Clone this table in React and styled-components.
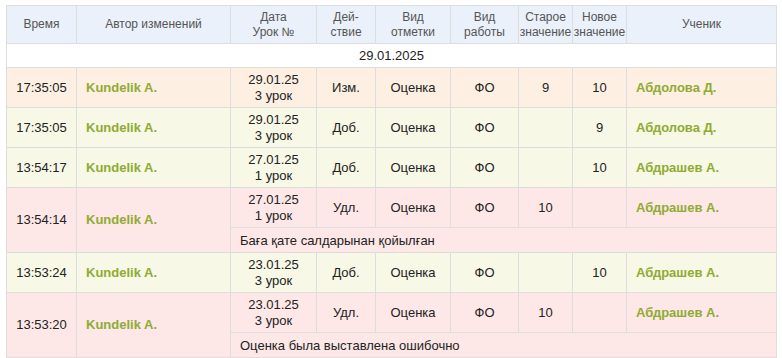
import React from 'react'
import styled, { createGlobalStyle } from 'styled-components'

const GlobalStyle = createGlobalStyle`
  body {
    margin: 0;
    padding: 5px 6px;
    background: #fff;
    font-family: "Liberation Sans", Arial, sans-serif;
  }
`

const Table = styled.table`
  width: 770px;
  border-collapse: collapse;
  table-layout: fixed;
  font-size: 13px;
  color: #222;
  border: 1px solid #dddddd;
`

const Th = styled.th`
  background: #eaf1fa;
  color: #555;
  font-size: 12px;
  font-weight: normal;
  line-height: 15px;
  height: 37px;
  padding: 0;
  border: 1px solid #dddddd;
  text-align: center;
  vertical-align: middle;
`

const DateCell = styled.td`
  height: 23px;
  text-align: center;
  background: #fff;
  border: 1px solid #dddddd;
  padding: 0;
`

const bgs = {
  edit: '#fdf0e3',
  add: '#f7f8e6',
  del: '#fde8e7',
}

const Tr = styled.tr`
  background: ${p => bgs[p.$kind]};
`

const Td = styled.td`
  height: 39px;
  padding: 0;
  border: 1px solid #dddddd;
  text-align: ${p => (p.$left ? 'left' : 'center')};
  padding-left: ${p => (p.$left ? '9px' : '0')};
  vertical-align: middle;
  line-height: 16px;
`

const Name = styled.span`
  color: #8fab33;
  font-weight: bold;
`

const Note = styled.td`
  height: 24px;
  padding: 0 0 0 9px;
  border: 1px solid #dddddd;
  text-align: left;
`

const widths = [70, 154, 86, 59, 75, 68, 54, 54, 150]

const rows = [
  { kind: 'edit', time: '17:35:05', date: '29.01.25', lesson: '3 урок', act: 'Изм.', oldV: '9', newV: '10', student: 'Абдолова Д.' },
  { kind: 'add', time: '17:35:05', date: '29.01.25', lesson: '3 урок', act: 'Доб.', oldV: '', newV: '9', student: 'Абдолова Д.' },
  { kind: 'add', time: '13:54:17', date: '27.01.25', lesson: '1 урок', act: 'Доб.', oldV: '', newV: '10', student: 'Абдрашев А.' },
  { kind: 'del', time: '13:54:14', date: '27.01.25', lesson: '1 урок', act: 'Удл.', oldV: '10', newV: '', student: 'Абдрашев А.', note: 'Баға қате салдарынан қойылған' },
  { kind: 'add', time: '13:53:24', date: '23.01.25', lesson: '3 урок', act: 'Доб.', oldV: '', newV: '10', student: 'Абдрашев А.' },
  { kind: 'del', time: '13:53:20', date: '23.01.25', lesson: '3 урок', act: 'Удл.', oldV: '10', newV: '', student: 'Абдрашев А.', note: 'Оценка была выставлена ошибочно' },
]

function App() {
  const list = rows.map((r, i) => {
    const span = r.note ? 2 : 1
    return (
      <React.Fragment key={i}>
        <Tr $kind={r.kind}>
          <Td rowSpan={span}>{r.time}</Td>
          <Td rowSpan={span} $left><Name>Kundelik A.</Name></Td>
          <Td>{r.date}<br />{r.lesson}</Td>
          <Td>{r.act}</Td>
          <Td>Оценка</Td>
          <Td>ФО</Td>
          <Td>{r.oldV}</Td>
          <Td>{r.newV}</Td>
          <Td $left><Name>{r.student}</Name></Td>
        </Tr>
        {r.note && (
          <Tr $kind={r.kind}>
            <Note colSpan={7}>{r.note}</Note>
          </Tr>
        )}
      </React.Fragment>
    )
  })

  return (
    <>
      <GlobalStyle />
      <Table>
        <colgroup>
          {widths.map((w, i) => <col key={i} style={{ width: w }} />)}
        </colgroup>
        <thead>
          <tr>
            <Th>Время</Th>
            <Th>Автор изменений</Th>
            <Th>Дата<br />Урок №</Th>
            <Th>Дей-<br />ствие</Th>
            <Th>Вид<br />отметки</Th>
            <Th>Вид<br />работы</Th>
            <Th>Старое<br />значение</Th>
            <Th>Новое<br />значение</Th>
            <Th>Ученик</Th>
          </tr>
        </thead>
        <tbody>
          <tr>
            <DateCell colSpan={9}>29.01.2025</DateCell>
          </tr>
          {list}
        </tbody>
      </Table>
    </>
  )
}

export default App
